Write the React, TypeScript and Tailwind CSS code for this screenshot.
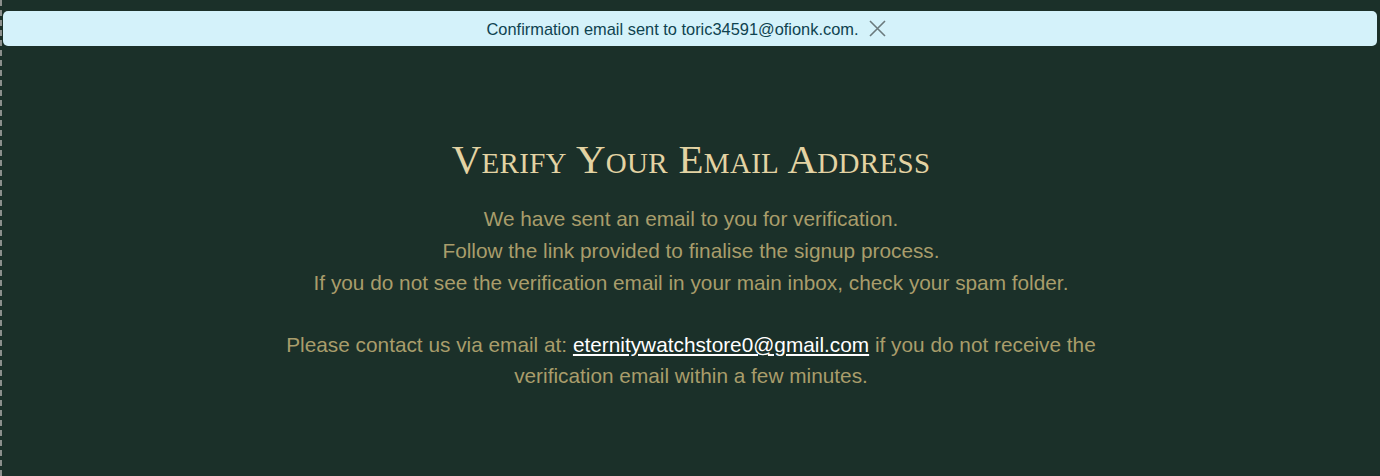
import React from "react";

export default function App() {
  return (
    <div className="h-[476px] w-full bg-[#1b3029] border-l-2 border-dashed border-[#8a8f8c] overflow-hidden" style={{ fontFamily: '"Liberation Sans", Arial, sans-serif' }}>
      <div className="pt-[11px] pl-[1px] pr-[3px]">
        <div className="h-[35px] rounded-[5px] bg-[#d4f2fa] flex items-center justify-center gap-[11px] pr-[7px] text-[#0f4350] text-[16.4px]">
          <span className="pt-[2px]">Confirmation email sent to toric34591@ofionk.com.</span>
          <svg width="17" height="17" viewBox="0 0 17 17" className="mb-[1px]">
            <path d="M1 1L16 16M16 1L1 16" stroke="#6b7a7d" strokeWidth="1.6" />
          </svg>
        </div>
      </div>
      <div className="flex flex-col items-center pt-[90px]">
        <h1 className="text-[41px] leading-[46px] text-[#e3d3a3] tracking-[0.3px]" style={{ fontFamily: '"Liberation Serif", "Times New Roman", serif', fontVariant: "small-caps" }}>
          Verify Your Email Address
        </h1>
        <div className="mt-[21px] text-[20.8px] leading-[32px] text-[#a99d6b] text-center max-w-[840px]">
          <p>We have sent an email to you for verification.</p>
          <p>Follow the link provided to finalise the signup process.</p>
          <p>If you do not see the verification email in your main inbox, check your spam folder.</p>
          <p className="mt-[30px] leading-[31px]">
            Please contact us via email at:{" "}
            <a className="text-white underline underline-offset-[2px]">eternitywatchstore0@gmail.com</a>{" "}
            if you do not receive the verification email within a few minutes.
          </p>
        </div>
      </div>
    </div>
  );
}
